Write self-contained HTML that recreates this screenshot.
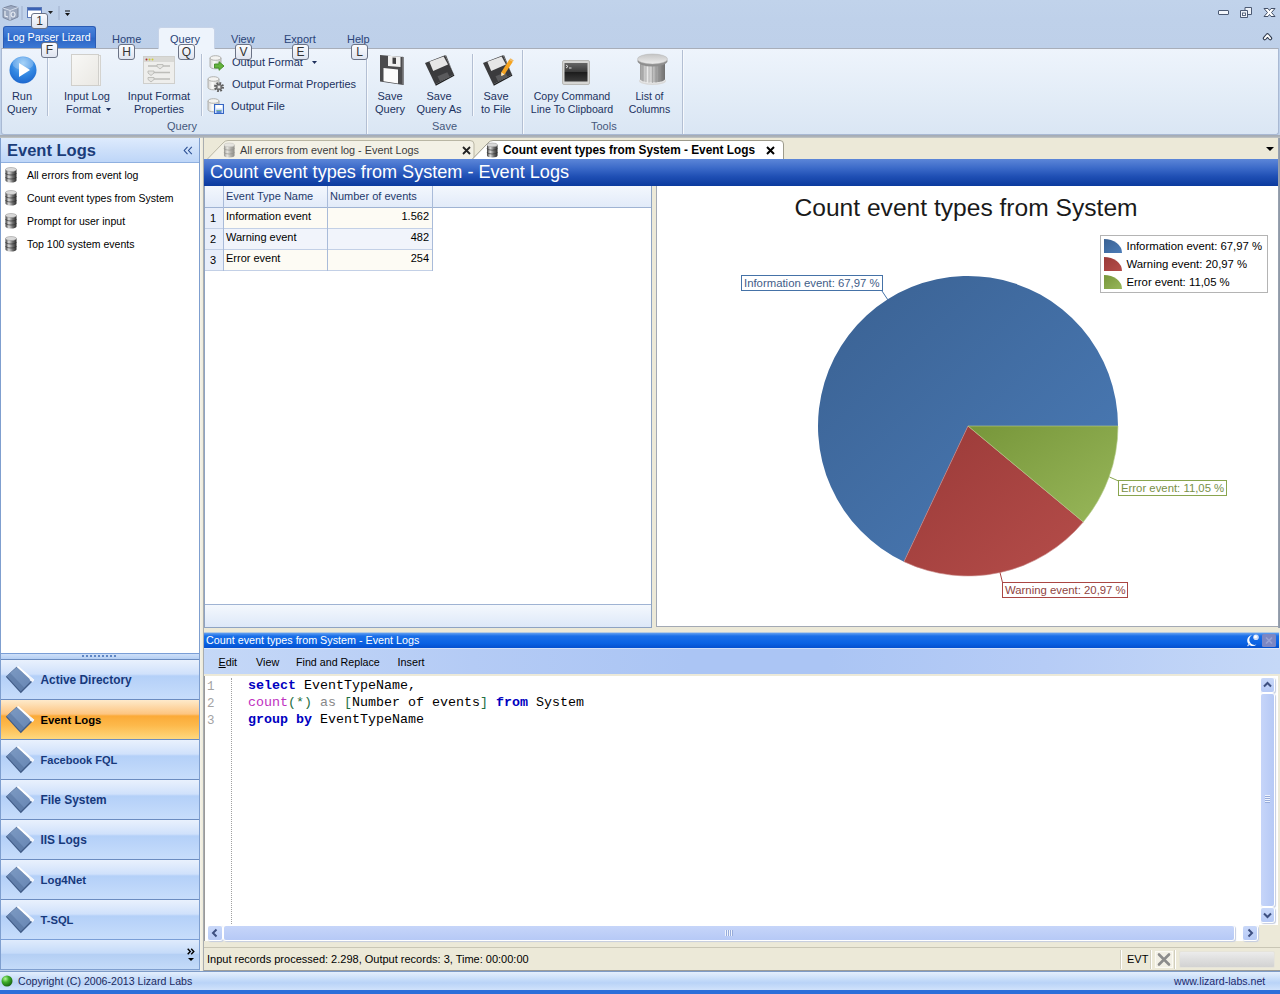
<!DOCTYPE html>
<html lang="en">
<head>
<meta charset="utf-8">
<title>Log Parser Lizard</title>
<style>
*{box-sizing:border-box;margin:0;padding:0}
html,body{width:1280px;height:994px;overflow:hidden}
body{position:relative;background:#bfd1ea;font-family:"Liberation Sans",sans-serif;font-size:11px;color:#1e2a4a}
.abs{position:absolute}
.t{position:absolute;white-space:nowrap;line-height:13px}
.c{text-align:center}
/* title + ribbon */
#titlebar{left:0;top:0;width:1280px;height:48px;background:linear-gradient(#c1d3eb,#bfd1ea 40%,#bed0e9)}
#ribbon{left:1px;top:48px;width:1278px;height:87px;background:linear-gradient(#eef4fc,#e5eef8 45%,#dae6f4);border:1px solid #a9b9d3;border-top:1px solid #a8aeb9;border-radius:0 0 3px 3px}
#appbtn{left:3px;top:26px;width:93px;height:22px;background:linear-gradient(#4a82da,#3470cf 45%,#2c66c6 55%,#3b78d4);border:1px solid #2b5cb4;border-bottom:none;border-radius:3px 3px 0 0;color:#fff;font-size:10.600px;line-height:21px;text-align:left;padding-left:3px;white-space:nowrap}
.rtab{color:#2a4478;font-size:11px}
#qtab{left:158px;top:27px;width:57px;height:22px;background:#eef4fc;border:1px solid #c6d3e8;border-bottom:none;border-radius:3px 3px 0 0}
.key{position:absolute;width:17px;height:16px;border:1px solid #6b7386;border-radius:3px;background:linear-gradient(#fbfcfe,#dfe4f0);color:#333;font-size:12px;line-height:14px;text-align:center}
.dd{display:inline-block;vertical-align:middle;margin-left:2px;position:relative;top:-1px}
.sep{position:absolute;width:1px;background:#b3bfd3;box-shadow:1px 0 0 #f6f9fd}
.glabel{color:#45587c}
.rl{color:#1c3260}
/* left panel */
#left{left:0;top:137px;width:200px;height:833px;background:#fff;border:1px solid #7f9fcf}
#lefthead{left:1px;top:138px;width:198px;height:25px;background:linear-gradient(#deebfd,#cfe1fa 45%,#bed6f8);border-bottom:1px solid #8fb0e0}
.li{color:#000;font-size:10.500px}
.nav{position:absolute;left:1px;width:198px;height:40px;background:linear-gradient(#e9f1fd 0%,#d0e1fb 36%,#b4d0f8 41%,#c7ddfb 100%);border-top:1px solid #6b8cc0;color:#17397c;font-weight:bold;font-size:11.900px}
.nav span{position:absolute;left:39.500px;top:14px;line-height:13px}
.nav.sel{background:linear-gradient(#feeacb 0%,#fdc581 36%,#fbaa38 41%,#fdb94b 65%,#fed87e 100%);color:#000}

.sbtn{position:absolute;width:13px;height:14px;background:linear-gradient(#c9d8f9,#b7caf6);border-radius:2px;box-shadow:0 0 0 1px #fff,1px 1px 1px 1px #c5cde0}
.sbtn svg{display:block}

</style>
</head>
<body>
<div id="titlebar" class="abs"></div>
<div id="ribbon" class="abs"></div>
<div id="appbtn" class="abs">Log Parser Lizard</div>
<div id="qtab" class="abs"></div>
<div class="t rtab" style="left:112px;top:33px">Home</div>
<div class="t rtab" style="left:170px;top:33px">Query</div>
<div class="t rtab" style="left:231px;top:33px">View</div>
<div class="t rtab" style="left:284px;top:33px">Export</div>
<div class="t rtab" style="left:347px;top:33px">Help</div>

<!-- quick access toolbar -->
<svg class="abs" style="left:2px;top:3px" width="80" height="22" viewBox="0 0 80 22">
 <g opacity=".95"><path d="M1 5 L9 2.5 L16 4.5 L16 14 L8 17.5 L1 14.5Z" fill="#9aa6bd" stroke="#6d7990" stroke-width=".8"/><path d="M1 5 L8 7.5 L16 4.5 M8 7.5 L8 17.5" fill="none" stroke="#dfe6f2" stroke-width=".9"/><path d="M3 8 v5 l3 1 M11 9 a2 2.5 0 1 0 .1 0" fill="none" stroke="#eef2f8" stroke-width="1.1"/></g>
 <rect x="19.5" y="3" width="1" height="14" fill="#9fb0cc"/>
 <rect x="25.5" y="4.5" width="14" height="10" fill="#fff" stroke="#5b79b8"/><rect x="26" y="5" width="13" height="2.500" fill="#3a62b4"/>
 <path d="M46 8 h5 l-2.500 3z" fill="#222"/>
 <rect x="56.5" y="3" width="1" height="14" fill="#9fb0cc"/>
 <path d="M63 7.5 h5 v1 h-5z M63 10 h5 l-2.5 3z" fill="#111"/>
</svg>
<div class="key" style="left:31px;top:13px">1</div>
<!-- window buttons -->
<svg class="abs" style="left:1212px;top:4px" width="66" height="40" viewBox="0 0 66 40">
 <rect x="6.500" y="6.500" width="10" height="4" rx=".5" fill="#f4f7fc" stroke="#4c5a73"/>
 <path d="M33 6.500 v-3 h6.500 v7 h-4 M28.500 6.500 h7 v7 h-7z" fill="#eef2f9" stroke="#4c5a73"/><rect x="30.500" y="9" width="3" height="2.500" fill="#fff" stroke="#4c5a73" stroke-width=".9"/>
 <path d="M52 4.500 L56 4.500 L57.500 6.500 L59 4.500 L63 4.500 L59.500 8.500 L63 12.500 L59 12.500 L57.500 10.500 L56 12.500 L52 12.500 L55.500 8.500Z" fill="#fff" stroke="#414e66" stroke-width="1"/>
 <path d="M52.800 34.300 L55.500 31.200 L58.200 34.300" fill="none" stroke="#2f3a4d" stroke-width="4" stroke-linecap="round" stroke-linejoin="round"/><path d="M52.800 34.300 L55.500 31.200 L58.200 34.300" fill="none" stroke="#fff" stroke-width="1.800" stroke-linecap="round" stroke-linejoin="round"/>
</svg>
<!-- ribbon items -->
<svg class="abs" style="left:8px;top:55px" width="30" height="30" viewBox="0 0 30 30">
 <defs><radialGradient id="pg" cx=".5" cy=".25" r=".8"><stop offset="0" stop-color="#8cc6f6"/><stop offset=".55" stop-color="#3287e2"/><stop offset="1" stop-color="#1a62ca"/></radialGradient></defs>
 <circle cx="15" cy="15" r="13.500" fill="url(#pg)"/><ellipse cx="15" cy="8.500" rx="10.500" ry="6.500" fill="#fff" opacity=".22"/>
 <path d="M11 8 L22 15 L11 22Z" fill="#fff"/>
</svg>
<div class="t c rl" style="left:0;top:90px;width:44px">Run<br>Query</div>
<div class="sep" style="left:47px;top:54px;height:62px"></div>
<svg class="abs" style="left:70px;top:53px" width="32" height="34" viewBox="0 0 32 34">
 <defs><linearGradient id="pp" x1="0" y1="0" x2="1" y2="1"><stop offset="0" stop-color="#f8f8f6"/><stop offset="1" stop-color="#eae8e3"/></linearGradient></defs>
 <rect x="3.500" y="2.500" width="27" height="30" fill="#f4f3f0" stroke="#d4d3cf"/><rect x="1.500" y="1.500" width="27" height="31" fill="url(#pp)" stroke="#d0cfcb"/>
</svg>
<div class="t c rl" style="left:57px;top:90px;width:60px">Input Log<br>&nbsp;Format <svg class="dd" width="5" height="3" viewBox="0 0 5 3"><path d="M0 0h5L2.500 3z" fill="#1e2f5c"/></svg></div>
<svg class="abs" style="left:142px;top:55px" width="34" height="30" viewBox="0 0 34 30">
 <rect x="1.500" y="1.500" width="31" height="27" fill="#eeeeec" stroke="#cfcfcc"/><rect x="2" y="2" width="30" height="5" fill="#d9d9d6"/>
 <circle cx="4.500" cy="4.500" r="1" fill="#a33"/><circle cx="7.500" cy="4.500" r="1" fill="#cc3"/><circle cx="10.500" cy="4.500" r="1" fill="#cc3"/>
 <g stroke="#bdbdb9" stroke-width="1.500"><path d="M6 11 h22 M6 17.500 h22 M6 24 h22"/></g>
 <g fill="#e4e4e1" stroke="#b5b5b1" stroke-width=".8"><path d="M15 9.500 h6 v2 l-3 2.500 l-3 -2.500z M6 16 h6 v2 l-3 2.500 l-3 -2.500z M6 22.500 h6 v2 l-3 2.500 l-3 -2.500z"/></g>
</svg>
<div class="t c rl" style="left:119px;top:90px;width:80px">Input Format<br>Properties</div>
<div class="sep" style="left:201px;top:54px;height:62px"></div>
<!-- small icons -->
<svg class="abs" style="left:207px;top:52px" width="20" height="64" viewBox="0 0 20 64">
 <defs><linearGradient id="cy" x1="0" y1="0" x2="1" y2="0"><stop offset="0" stop-color="#d4d4d2"/><stop offset=".4" stop-color="#fafaf9"/><stop offset="1" stop-color="#c9c9c6"/></linearGradient></defs>
 <g id="cyl"><path d="M3 6 v8.500 a5.500 2.300 0 0 0 11 0 v-8.500" fill="url(#cy)" stroke="#a9a9a6" stroke-width=".9"/><ellipse cx="8.500" cy="6" rx="5.500" ry="2.300" fill="#f3f3f1" stroke="#a9a9a6" stroke-width=".9"/></g>
 <path d="M7.500 12 h4.500 v-2.300 l5 4.300 l-5 4.300 v-2.300 h-4.500z" fill="#63b23c" stroke="#3f8a24" stroke-width=".9"/>
 <use href="#cyl" x="-2" y="21"/>
 <g transform="translate(12,35)"><circle r="3.900" fill="none" stroke="#5f5f5f" stroke-width="2.200" stroke-dasharray="1.700 1.360"/><circle r="2.900" fill="#8d8d8d" stroke="#555" stroke-width=".8"/><circle r="1.200" fill="#e9e9e9"/></g>
 <use href="#cyl" x="-2" y="43"/>
 <rect x="7.500" y="52.500" width="9" height="9" fill="#cfe0fb" stroke="#3565c4"/><rect x="9" y="53" width="6" height="3.500" fill="#fff"/><rect x="9.500" y="58" width="5" height="3" fill="#5a86d8"/><path d="M9.500 58.500 h5" stroke="#7fc08a" stroke-width=".8"/>
</svg>
<div class="t rl" style="left:232px;top:56px">Output Format <svg class="dd" style="margin-left:6px" width="5" height="3" viewBox="0 0 5 3"><path d="M0 0h5L2.500 3z" fill="#1e2f5c"/></svg></div>
<div class="t rl" style="left:232px;top:78px">Output Format Properties</div>
<div class="t rl" style="left:231px;top:100px">Output File</div>
<div class="t glabel" style="left:167px;top:120px">Query</div>
<div class="sep" style="left:366px;top:50px;height:84px"></div>

<!-- save group -->
<svg class="abs" style="left:378px;top:53px" width="28" height="34" viewBox="0 0 28 34">
 <path d="M2 2 L25.500 4 L25.500 32 L2 28.500Z" fill="#4b4b4d"/><path d="M24 3.800 L25.500 4 L25.500 32 L24 31.800Z" fill="#6e6e70"/>
 <path d="M10 2.800 L22.500 3.800 L22.500 14 L10 13Z" fill="#f0f0f0"/><path d="M14.500 4.500 L18 4.800 L18 11 L14.500 10.700Z" fill="#3f3f41"/>
 <path d="M5.500 15 L20 16.500 L20 30.500 L5.500 28.300Z" fill="#fcfcfc"/>
</svg>
<div class="t c rl" style="left:370px;top:90px;width:40px">Save<br>Query</div>
<svg class="abs" style="left:424px;top:53px" width="34" height="34" viewBox="0 0 34 34">
 <g id="fl2"><path d="M1 10 L21 2.200 L30 21.500 L11.200 31.500Z" fill="#3b3b3d"/><path d="M11.200 31.500 L30 21.500 L30.300 22.800 L11.800 32.800Z" fill="#1e1e1e"/><path d="M21 2.200 L22.300 2.400 L30.300 22.800 L30 21.500Z" fill="#555"/>
 <path d="M5.400 8.800 L19.600 3.400 L24 11.500 L9.200 18Z" fill="#e6e6e6"/><path d="M13.500 23.300 L23.300 19.200 L25.800 24.200 L16 28.300Z" fill="#5a5a5c"/></g>
</svg>
<div class="t c rl" style="left:410px;top:90px;width:58px">Save<br>Query As</div>
<div class="sep" style="left:472px;top:54px;height:62px"></div>
<svg class="abs" style="left:482px;top:53px" width="36" height="34" viewBox="0 0 36 34">
 <use href="#fl2"/>
 <path d="M27.300 6.500 L30.800 8.800 L22.500 21.500 L19.300 23 L19.300 19.300Z" fill="#f5a31f"/><path d="M27.300 6.500 L28.500 5.200 L31.800 7.400 L30.800 8.800Z" fill="#f0b860"/><path d="M19.300 19.300 L22.500 21.500 L19.300 23Z" fill="#f3e3c3"/>
</svg>
<div class="t c rl" style="left:474px;top:90px;width:44px">Save<br>to File</div>
<div class="t glabel" style="left:432px;top:120px">Save</div>
<div class="sep" style="left:522px;top:50px;height:84px"></div>
<!-- tools group -->
<svg class="abs" style="left:562px;top:60px" width="28" height="25" viewBox="0 0 28 25">
 <defs><linearGradient id="tm" x1="0" y1="0" x2="0" y2="1"><stop offset="0" stop-color="#666"/><stop offset=".48" stop-color="#3a3a3a"/><stop offset=".5" stop-color="#1c1c1c"/><stop offset="1" stop-color="#3b3b3b"/></linearGradient></defs>
 <rect x=".5" y=".5" width="27" height="24" rx="1.500" fill="#d6d6d4" stroke="#b9b9b6"/><rect x="2.500" y="3" width="23" height="18.500" fill="url(#tm)"/>
 <path d="M4 5 l2 1.500 l-2 1.500 M7 8 h2.500" stroke="#f2f2f2" stroke-width=".9" fill="none"/>
</svg>
<div class="t c rl" style="left:522px;top:90px;width:100px;font-size:10.600px">Copy Command<br>Line To Clipboard</div>
<svg class="abs" style="left:635px;top:53px" width="34" height="34" viewBox="0 0 34 34">
 <defs><linearGradient id="col" x1="0" y1="0" x2="1" y2="0"><stop offset="0" stop-color="#9a9a9a"/><stop offset=".3" stop-color="#e9e9e9"/><stop offset=".65" stop-color="#a8a8a8"/><stop offset="1" stop-color="#6f6f6f"/></linearGradient>
 <linearGradient id="colt" x1="0" y1="0" x2="0" y2="1"><stop offset="0" stop-color="#c4c4c4"/><stop offset="1" stop-color="#ededed"/></linearGradient></defs>
 <ellipse cx="17.500" cy="28" rx="13.500" ry="4" fill="#d9d9d9"/><ellipse cx="17.500" cy="27" rx="12.500" ry="3.500" fill="#ececec"/>
 <path d="M5 9 v17 a12.500 3.500 0 0 0 25 0 v-17z" fill="url(#col)"/>
 <g stroke="#7d7d7d" stroke-width=".7" opacity=".55"><path d="M8 11 v17.500 M11 11 v18.300 M14 11 v18.800 M17.500 11 v19 M21 11 v18.800 M24 11 v18.300 M27 11 v17.500"/></g>
 <ellipse cx="17.500" cy="8" rx="15" ry="5.500" fill="#8e8e8e"/><ellipse cx="17.500" cy="6" rx="15" ry="5" fill="url(#colt)" stroke="#b5b5b5" stroke-width=".5"/>
</svg>
<div class="t c rl" style="left:619.500px;top:90px;width:60px;font-size:10.500px">List of<br>Columns</div>
<div class="t glabel" style="left:591px;top:120px">Tools</div>
<div class="sep" style="left:682px;top:50px;height:84px"></div>
<!-- key tips -->
<div class="key" style="left:41px;top:42px">F</div>
<div class="key" style="left:118px;top:44px">H</div>
<div class="key" style="left:178px;top:44px">Q</div>
<div class="key" style="left:235px;top:44px">V</div>
<div class="key" style="left:292px;top:44px">E</div>
<div class="key" style="left:351px;top:44px">L</div>

<!-- left panel -->
<svg width="0" height="0" style="position:absolute"><defs>
 <linearGradient id="dbg" x1="0" y1="0" x2="1" y2="0"><stop offset="0" stop-color="#3a3a3a"/><stop offset=".3" stop-color="#dcdcdc"/><stop offset=".65" stop-color="#6e6e6e"/><stop offset="1" stop-color="#2c2c2c"/></linearGradient>
 <g id="db"><path d="M.5 2.500 v11 a5.500 2 0 0 0 11 0 v-11z" fill="url(#dbg)"/><ellipse cx="6" cy="2.500" rx="5.500" ry="2" fill="#d9d9d9" stroke="#8d8d8d" stroke-width=".5"/><path d="M.5 6 a5.500 2 0 0 0 11 0 M.5 10 a5.500 2 0 0 0 11 0" fill="none" stroke="#333" stroke-width=".9" opacity=".75"/></g>
 <linearGradient id="bkg" x1="0" y1="0" x2="1" y2="1"><stop offset="0" stop-color="#7e9bc3"/><stop offset="1" stop-color="#6685b3"/></linearGradient>
 <g id="book"><path d="M1.800 10.700 L12.600 .8 L29.200 14.800 L16.800 27.200Z" fill="#405b86"/><path d="M2.700 10.100 L12.700 1.200 L27.800 14.200 L16.700 25.200Z" fill="url(#bkg)"/><path d="M2.700 10.100 L6.200 7 L20.300 21.700 L16.700 25.200Z" fill="#56739f" opacity=".55"/><path d="M12.800 .9 L14.300 .1 L30.200 13.700 L29 15.600 L26.800 13.900Z" fill="#fff"/><path d="M25 10 L30.200 13.700 L28.600 16.200 L26 14.600Z" fill="#f2f5fb"/></g>
</defs></svg>
<div id="left" class="abs"></div>
<div id="lefthead" class="abs"></div>
<div class="t" style="left:7px;top:141px;font-size:16.500px;font-weight:bold;color:#1b3d7a;line-height:19px">Event Logs</div>
<svg class="abs" style="left:183px;top:146px" width="10" height="9" viewBox="0 0 10 9"><path d="M4.500 .8 L1.200 4.500 L4.500 8.200 M8.800 .8 L5.500 4.500 L8.800 8.200" fill="none" stroke="#2a4e93" stroke-width="1.100"/></svg>
<svg class="abs" style="left:5px;top:167px" width="12" height="16" viewBox="0 0 12 16"><use href="#db"/></svg><div class="t li" style="left:27px;top:169px">All errors from event log</div>
<svg class="abs" style="left:5px;top:190px" width="12" height="16" viewBox="0 0 12 16"><use href="#db"/></svg><div class="t li" style="left:27px;top:192px">Count event types from System</div>
<svg class="abs" style="left:5px;top:213px" width="12" height="16" viewBox="0 0 12 16"><use href="#db"/></svg><div class="t li" style="left:27px;top:215px">Prompt for user input</div>
<svg class="abs" style="left:5px;top:236px" width="12" height="16" viewBox="0 0 12 16"><use href="#db"/></svg><div class="t li" style="left:27px;top:238px">Top 100 system events</div>

<div class="abs" style="left:1px;top:653px;width:198px;height:6px;background:linear-gradient(#cfe0f9,#b5cff3);border-top:1px solid #7a9ed6"></div>
<div class="abs" style="left:82px;top:655px;width:36px;height:2px;background:repeating-linear-gradient(90deg,#5f86c4 0 2px,transparent 2px 4px)"></div>
<div class="nav" style="top:659px"><svg width="32" height="30" viewBox="0 0 32 30" style="position:absolute;left:3px;top:6px"><use href="#book"/></svg><span>Active Directory</span></div>
<div class="nav sel" style="top:699px"><svg width="32" height="30" viewBox="0 0 32 30" style="position:absolute;left:3px;top:6px"><use href="#book"/></svg><span style="font-size:11.3px">Event Logs</span></div>
<div class="nav" style="top:739px"><svg width="32" height="30" viewBox="0 0 32 30" style="position:absolute;left:3px;top:6px"><use href="#book"/></svg><span style="font-size:11.05px">Facebook FQL</span></div>
<div class="nav" style="top:779px"><svg width="32" height="30" viewBox="0 0 32 30" style="position:absolute;left:3px;top:6px"><use href="#book"/></svg><span>File System</span></div>
<div class="nav" style="top:819px"><svg width="32" height="30" viewBox="0 0 32 30" style="position:absolute;left:3px;top:6px"><use href="#book"/></svg><span>IIS Logs</span></div>
<div class="nav" style="top:859px"><svg width="32" height="30" viewBox="0 0 32 30" style="position:absolute;left:3px;top:6px"><use href="#book"/></svg><span style="font-size:11.4px">Log4Net</span></div>
<div class="nav" style="top:899px"><svg width="32" height="30" viewBox="0 0 32 30" style="position:absolute;left:3px;top:6px"><use href="#book"/></svg><span style="font-size:11.2px">T-SQL</span></div>

<div class="abs" style="left:1px;top:939px;width:198px;height:30px;background:linear-gradient(#dfebfc,#c5dbf9 45%,#b4cff4 50%,#c4dbf9);border-top:1px solid #7a9ed6"></div>
<svg class="abs" style="left:187px;top:948px" width="8" height="7" viewBox="0 0 8 7"><path d="M.7 .7 L3.300 3.500 L.7 6.300 M4.200 .7 L6.800 3.500 L4.200 6.300" fill="none" stroke="#000" stroke-width="1.400"/></svg>
<svg class="abs" style="left:188px;top:958px" width="6" height="3" viewBox="0 0 6 3"><path d="M0 0h6L3 3z" fill="#000"/></svg>
<!-- bottom status bar -->
<div class="abs" style="left:0;top:971px;width:1280px;height:19px;background:linear-gradient(#e4effd,#c3daf9 45%,#b9d3f7 60%,#d0e2fb);border-top:1px solid #7d9bc7"></div>
<div class="abs" style="left:0;top:990px;width:1280px;height:4px;background:#2c6fd9"></div>
<svg class="abs" style="left:1px;top:975px" width="12" height="12" viewBox="0 0 12 12"><defs><radialGradient id="gb" cx=".35" cy=".3" r=".8"><stop offset="0" stop-color="#b5f59a"/><stop offset=".4" stop-color="#3fae2a"/><stop offset="1" stop-color="#12560c"/></radialGradient></defs><circle cx="6" cy="6" r="5.500" fill="url(#gb)"/></svg>
<div class="t" style="left:18px;top:975px;font-size:10.600px;color:#1b2a5e">Copyright (C) 2006-2013 Lizard Labs</div>
<div class="t" style="left:1174px;top:975px;font-size:10.600px;color:#1b2a6e">www.lizard-labs.net</div>

<!-- main area -->
<div class="abs" style="left:0;top:135px;width:1280px;height:3px;background:linear-gradient(#a3aab3,#adb3ba 60%,#c9cbc4)"></div>
<div class="abs" style="left:200px;top:138px;width:1080px;height:833px;background:#ece9d8"></div>
<div class="abs" style="left:204px;top:138px;width:1074px;height:22px;background:#ece9d8"></div>
<div class="abs" style="left:203px;top:137px;width:1px;height:834px;background:#a9adb0"></div>
<div class="abs" style="left:200px;top:138px;width:3px;height:833px;background:linear-gradient(90deg,#f6f4ea,#ece9d8)"></div>
<!-- tabs -->
<svg class="abs" style="left:204px;top:138px" width="600" height="22" viewBox="0 0 600 22">
 <path d="M3 21.500 L19 5 Q21 2.500 24 2.500 L266 2.500 Q270 2.500 270 6 L270 21.500" fill="#f3f1e6" stroke="#b9b6a4"/>
 <path d="M268 21.500 L284 5 Q286 2.500 289 2.500 L576 2.500 Q579.500 2.500 579.500 6 L579.500 22 L268 22Z" fill="#fff" stroke="#9d9b8c"/>
 <rect x="269" y="21" width="310" height="1.500" fill="#fff"/>
 <g transform="translate(19.500,4.500)" opacity=".5"><use href="#db" transform="scale(.96)"/></g>
 <g transform="translate(282.500,4.500)"><use href="#db" transform="scale(.96)"/></g>
 <path d="M259 9 l7 7 M266 9 l-7 7" stroke="#222" stroke-width="1.800"/>
 <path d="M563 9 l7 7 M570 9 l-7 7" stroke="#000" stroke-width="2"/>
</svg>
<div class="t" style="left:240px;top:144px;font-size:10.850px;color:#3c3c3c">All errors from event log - Event Logs</div>
<div class="t" style="left:503px;top:143.500px;font-size:11.850px;font-weight:bold;color:#000">Count event types from System - Event Logs</div>
<svg class="abs" style="left:1266px;top:147px" width="8" height="4" viewBox="0 0 8 4"><path d="M0 0h8L4 4z" fill="#000"/></svg>
<!-- blue title -->
<div class="abs" style="left:204px;top:159px;width:1074px;height:27px;background:linear-gradient(#5c86d8,#3a69c8 35%,#1f4fb4 65%,#0b3a9e);"></div>
<div class="t" style="left:210px;top:162px;font-size:18.100px;color:#fff;line-height:21px">Count event types from System - Event Logs</div>
<!-- grid panel -->
<div class="abs" style="left:204px;top:186px;width:448px;height:442px;background:#fff;border:1px solid #8ea3c2;border-top:none"></div>
<div class="abs" style="left:205px;top:186px;width:446px;height:22px;background:linear-gradient(#f3f7fd,#e2ebf9);border-bottom:1px solid #9fb3d3"></div>
<div class="t" style="left:226px;top:190px;color:#1e3a6c">Event Type Name</div>
<div class="t" style="left:330px;top:190px;color:#1e3a6c">Number of events</div>
<div class="abs" style="left:205px;top:208px;width:18px;height:63px;background:#e8eefa"></div>
<div class="abs" style="left:224px;top:208px;width:208px;height:20px;background:#fdfbf4"></div>
<div class="abs" style="left:224px;top:229px;width:208px;height:20px;background:#f1f4fb"></div>
<div class="abs" style="left:224px;top:250px;width:208px;height:20px;background:#fdfbf4"></div>
<div class="abs" style="left:205px;top:228px;width:228px;height:1px;background:#c3d0e6"></div>
<div class="abs" style="left:205px;top:249px;width:228px;height:1px;background:#c3d0e6"></div>
<div class="abs" style="left:205px;top:270px;width:228px;height:1px;background:#c3d0e6"></div>
<div class="abs" style="left:223px;top:186px;width:1px;height:85px;background:#a9bbd9"></div>
<div class="abs" style="left:327px;top:186px;width:1px;height:85px;background:#a9bbd9"></div>
<div class="abs" style="left:432px;top:186px;width:1px;height:85px;background:#a9bbd9"></div>
<div class="t" style="left:210px;top:212px;color:#000">1</div>
<div class="t" style="left:210px;top:233px;color:#000">2</div>
<div class="t" style="left:210px;top:254px;color:#000">3</div>
<div class="t" style="left:226px;top:210px;color:#000">Information event</div>
<div class="t" style="left:226px;top:231px;color:#000">Warning event</div>
<div class="t" style="left:226px;top:252px;color:#000">Error event</div>
<div class="t" style="left:380px;top:210px;width:49px;text-align:right;color:#000">1.562</div>
<div class="t" style="left:380px;top:231px;width:49px;text-align:right;color:#000">482</div>
<div class="t" style="left:380px;top:252px;width:49px;text-align:right;color:#000">254</div>
<div class="abs" style="left:205px;top:604px;width:446px;height:23px;background:linear-gradient(#f4f8fd,#dde8f8);border-top:1px solid #9fb3d3"></div>
<!-- chart panel -->
<div class="abs" style="left:656px;top:186px;width:624px;height:441px;background:#fff;border:1px solid #a3a9b4;border-top:none"></div>

<svg class="abs" style="left:657px;top:186px" width="620" height="440" viewBox="657 186 620 440" font-family="Liberation Sans, sans-serif">
 <defs>
  <linearGradient id="gbl" x1="0" y1="0" x2="1" y2="1"><stop offset="0" stop-color="#3a6192"/><stop offset="1" stop-color="#4b7cb8"/></linearGradient>
  <linearGradient id="grd" x1="0" y1="0" x2="1" y2="1"><stop offset="0" stop-color="#9a3a38"/><stop offset="1" stop-color="#b54d4a"/></linearGradient>
  <linearGradient id="ggr" x1="0" y1="0" x2="1" y2="1"><stop offset="0" stop-color="#77963a"/><stop offset="1" stop-color="#98b75a"/></linearGradient>
 </defs>
 <text x="966" y="216" font-size="24.600" text-anchor="middle" fill="#1a1a1a">Count event types from System</text>
 <path d="M968 426 L903.96 561.64 A150 150 0 1 1 1118.00 426.00Z" fill="url(#gbl)"/>
 <path d="M968 426 L1083.28 521.98 A150 150 0 0 1 903.96 561.64Z" fill="url(#grd)" stroke="#c98a88" stroke-width=".6"/>
 <path d="M968 426 L1118.00 426.00 A150 150 0 0 1 1083.28 521.98Z" fill="url(#ggr)" stroke="#b9cf8f" stroke-width=".6"/>
 <!-- labels -->
 <path d="M882 291 L888 300" stroke="#4572a7" fill="none"/>
 <rect x="741.500" y="275.500" width="141" height="15" fill="#fff" stroke="#4572a7"/>
 <text x="744" y="287" font-size="11.350" fill="#3f5d88">Information event: 67,97 %</text>
 <path d="M1109.500 477 L1118.500 481" stroke="#89a54e" fill="none"/>
 <rect x="1118.500" y="480.500" width="108" height="15" fill="#fff" stroke="#89a54e"/>
 <text x="1121" y="492" font-size="11.350" fill="#788f47">Error event: 11,05 %</text>
 <path d="M1000 572.500 L1002.500 582.500" stroke="#aa4643" fill="none"/>
 <rect x="1002.500" y="582.500" width="125" height="15" fill="#fff" stroke="#aa4643"/>
 <text x="1005" y="594" font-size="11.350" fill="#8f4441">Warning event: 20,97 %</text>
 <!-- legend -->
 <rect x="1100.500" y="235.500" width="167" height="57" fill="#fff" stroke="#b4b4b4"/>
 <path d="M1104 253 V239 A18 14 0 0 1 1122 253Z" fill="url(#gbl)"/>
 <path d="M1104 271 V257 A18 14 0 0 1 1122 271Z" fill="url(#grd)"/>
 <path d="M1104 289 V275 A18 14 0 0 1 1122 289Z" fill="url(#ggr)"/>
 <text x="1126.500" y="250" font-size="11.350" fill="#000">Information event: 67,97 %</text>
 <text x="1126.500" y="268" font-size="11.350" fill="#000">Warning event: 20,97 %</text>
 <text x="1126.500" y="286" font-size="11.350" fill="#000">Error event: 11,05 %</text>
</svg>
<div class="abs" style="left:1278px;top:138px;width:2px;height:490px;background:linear-gradient(90deg,#9ca5b2,#8c96a4)"></div>

<!-- query panel -->
<div class="abs" style="left:204px;top:632px;width:1075px;height:16px;background:linear-gradient(#ece9d8 0,#5b9bf0 8%,#1a6fe8 25%,#0a62e3 70%,#0450cf)"></div>
<div class="t" style="left:206px;top:634px;font-size:10.750px;color:#fff;line-height:12px">Count event types from System - Event Logs</div>
<svg class="abs" style="left:1244px;top:633px" width="34" height="15" viewBox="0 0 34 15">
 <path d="M8.500 2 a5.500 5.500 0 1 0 4 9.500 a4.800 4.800 0 0 1 -4 -9.500z" fill="#fff"/><path d="M3.500 13 L6 10.500" stroke="#c8d6f3" stroke-width="1.300"/><circle cx="12" cy="4.300" r="2.800" fill="#cfdcf7"/><circle cx="11.500" cy="3.800" r="1.500" fill="#fff"/>
 <rect x="18" y="1" width="14" height="13" rx="1.500" fill="#7c87c3"/><path d="M22 4.500 l6 6 M28 4.500 l-6 6" stroke="#98a2d3" stroke-width="1.600"/>
</svg>
<div class="abs" style="left:204px;top:648px;width:1076px;height:26px;background:linear-gradient(rgba(255,255,255,.6) 0,rgba(255,255,255,0) 6%),linear-gradient(90deg,#c5d8f7 0%,#b4cbf5 25%,#abc5f4 45%,#abc5f4 58%,#b6ccf6 78%,#c5d8f7 100%)"></div>
<div class="t" style="left:218.500px;top:656px;color:#000;font-size:10.800px"><u>E</u>dit</div>
<div class="t" style="left:256px;top:656px;color:#000;font-size:10.800px">View</div>
<div class="t" style="left:296px;top:656px;color:#000;font-size:10.700px">Find and Replace</div>
<div class="t" style="left:397.500px;top:656px;color:#000;font-size:10.800px">Insert</div>
<div class="abs" style="left:204px;top:674px;width:1076px;height:2px;background:#ece9d8"></div>
<div class="abs" style="left:204px;top:676px;width:1px;height:265px;background:#9a9a9a"></div>
<div class="abs" style="left:205px;top:676px;width:1054px;height:249px;background:#fff"></div>
<div class="abs" style="left:231px;top:678px;width:0;height:246px;border-left:1px dotted #a0a0a0"></div>
<div class="t mono" style="left:207px;top:679px;color:#a3a3a3;font-family:'Liberation Mono',monospace;font-size:12.500px;line-height:17px">1<br>2<br>3</div>
<pre class="t mono" style="white-space:pre;left:248px;top:677px;font-family:'Liberation Mono',monospace;font-size:13.330px;line-height:17px;color:#000"><b style="color:#0000c0">select</b> EventTypeName,
<span style="color:#c030c0">count</span><span style="color:#1f6f43">(*)</span> <span style="color:#888">as</span> <span style="color:#1f6f43">[</span>Number of events<span style="color:#1f6f43">]</span> <b style="color:#0000c0">from</b> System
<b style="color:#0000c0">group by</b> EventTypeName</pre>
<!-- vscroll -->
<div class="abs" style="left:1259px;top:676px;width:19px;height:249px;background:#fff"></div>
<div class="sbtn" style="left:1261px;top:678px"><svg width="13" height="14" viewBox="0 0 13 14"><path d="M3 8.500 L6.500 5 L10 8.500" fill="none" stroke="#3d4f80" stroke-width="2"/></svg></div>
<div class="abs" style="left:1261px;top:694px;width:13px;height:212px;background:linear-gradient(90deg,#c6d5f9,#b6c9f6);border-radius:2px;box-shadow:0 0 0 1px #fff,1px 1px 1px 1px #c5cde0"></div>
<div class="abs" style="left:1265px;top:795px;width:5px;height:8px;background:repeating-linear-gradient(#eef3fd 0 1px,#97acdb 1px 2px)"></div>
<div class="sbtn" style="left:1261px;top:908px"><svg width="13" height="14" viewBox="0 0 13 14"><path d="M3 5.500 L6.500 9 L10 5.500" fill="none" stroke="#3d4f80" stroke-width="2"/></svg></div>
<!-- hscroll -->
<div class="abs" style="left:205px;top:925px;width:1054px;height:16px;background:#fff"></div>
<div class="abs" style="left:1259px;top:925px;width:19px;height:16px;background:#ece9d8"></div>
<div class="sbtn" style="left:208px;top:926px;width:14px;height:14px"><svg width="14" height="14" viewBox="0 0 14 14"><path d="M8.500 3.500 L5 7 L8.500 10.500" fill="none" stroke="#3d4f80" stroke-width="2"/></svg></div>
<div class="abs" style="left:224px;top:926px;width:1010px;height:14px;background:linear-gradient(#c6d5f9,#b6c9f6);border-radius:2px;box-shadow:0 0 0 1px #fff,1px 1px 1px 1px #c5cde0"></div>
<div class="abs" style="left:725px;top:930px;width:8px;height:6px;background:repeating-linear-gradient(90deg,#eef3fd 0 1px,#97acdb 1px 2px)"></div>
<div class="sbtn" style="left:1243px;top:926px;width:14px;height:14px"><svg width="14" height="14" viewBox="0 0 14 14"><path d="M5.500 3.500 L9 7 L5.500 10.500" fill="none" stroke="#3d4f80" stroke-width="2"/></svg></div>
<!-- query status -->
<div class="abs" style="left:204px;top:947px;width:1076px;height:1px;background:#c9c6b5"></div>
<div class="abs" style="left:204px;top:970px;width:1076px;height:1px;background:#9c9c98"></div>
<div class="t" style="left:207px;top:953px;color:#000">Input records processed: 2.298, Output records: 3, Time: 00:00:00</div>
<div class="abs" style="left:1121px;top:950px;width:1px;height:19px;background:#fff;box-shadow:-1px 0 0 #d2cfbf"></div>
<div class="t" style="left:1127px;top:953px;color:#000">EVT</div>
<div class="abs" style="left:1151px;top:950px;width:1px;height:19px;background:#fff;box-shadow:-1px 0 0 #d2cfbf"></div>
<svg class="abs" style="left:1155px;top:951px" width="18" height="17" viewBox="0 0 18 17"><rect x=".5" y=".5" width="17" height="16" fill="#f2f0e6" stroke="#fbfaf4"/><path d="M4 3.500 l10 10 M14 3.500 l-10 10" stroke="#8c8c8c" stroke-width="2.600" stroke-linecap="round"/></svg>
<div class="abs" style="left:1175px;top:950px;width:1px;height:19px;background:#fff;box-shadow:-1px 0 0 #d2cfbf"></div>
<div class="abs" style="left:1179px;top:951px;width:96px;height:17px;background:linear-gradient(#ececec,#dedede 50%,#d2d2d2);border-radius:2px;border:1px solid #e6e4da"></div>
</body>
</html>
